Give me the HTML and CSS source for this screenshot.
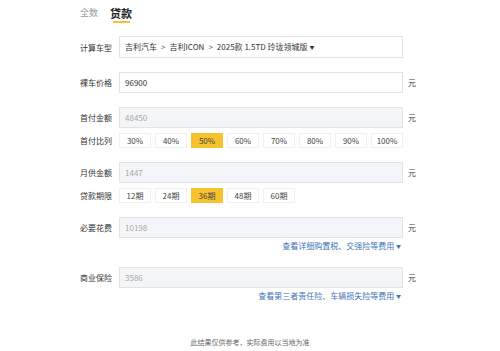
FILE: index.html
```html
<!DOCTYPE html>
<html>
<head>
  <meta charset="utf-8">
  <title>贷款计算</title>
  <link rel="stylesheet" href="styles.css">
</head>
<body>
<div class="calc">

  <div class="tabs">
    <span class="tab">全数</span>
    <span class="tab active">贷款</span>
  </div>

  <div class="row first">
    <span class="label">计算车型</span>
    <div class="box">吉利汽车<span class="sep">&gt;</span>吉利ICON<span class="sep">&gt;</span>2025款 1.5TD 玲珑领城版 <span class="caret">▼</span></div>
    <span class="unit"></span>
  </div>

  <div class="row gap">
    <span class="label">裸车价格</span>
    <div class="box">96900</div>
    <span class="unit">元</span>
  </div>

  <div class="row gap">
    <span class="label">首付金额</span>
    <div class="box off">48450</div>
    <span class="unit">元</span>
  </div>
  <div class="row opts">
    <span class="label">首付比列</span>
    <div class="btns">
      <span class="btn">30%</span>
      <span class="btn">40%</span>
      <span class="btn on">50%</span>
      <span class="btn">60%</span>
      <span class="btn">70%</span>
      <span class="btn">80%</span>
      <span class="btn">90%</span>
      <span class="btn">100%</span>
    </div>
  </div>

  <div class="row gap">
    <span class="label">月供金额</span>
    <div class="box off">1447</div>
    <span class="unit">元</span>
  </div>
  <div class="row opts">
    <span class="label">贷款期限</span>
    <div class="btns">
      <span class="btn">12期</span>
      <span class="btn">24期</span>
      <span class="btn on">36期</span>
      <span class="btn">48期</span>
      <span class="btn">60期</span>
    </div>
  </div>

  <div class="row gap">
    <span class="label">必要花费</span>
    <div class="box off">10198</div>
    <span class="unit">元</span>
  </div>
  <div class="more">查看详细购置税、交强险等费用 <span class="caret">▼</span></div>

  <div class="row gap2">
    <span class="label">商业保险</span>
    <div class="box off">3586</div>
    <span class="unit">元</span>
  </div>
  <div class="more">查看第三者责任险、车辆损失险等费用 <span class="caret">▼</span></div>
</div>

<p class="note">此结果仅供参考，实际费用以当地为准</p>
</body>
</html>
```

FILE: styles.css
```css
body{
  margin: 0;
  background: #ffffff;
  font-family: "Noto Sans CJK SC", "Noto Sans", sans-serif;
  color: #333333;
}

.calc {
  padding: 0 0 0 80px;
  width: 340px;
}

.tabs {
  display: flex;
  align-items: flex-end;
  gap: 12px;
  height: 21px;
  padding-top: 2px;
}

.tab {
  font-size: 9px;
  color: #9a9a9a;
  line-height: 14px;
  padding-bottom: 3px;
}

.tab.active {
  font-size: 11px;
  font-weight: bold;
  color: #222222;
  background: linear-gradient(#f4c430, #f4c430) no-repeat center bottom / 17px 2px;
}

.row {
  display: flex;
  align-items: center;
}

.row.first { margin-top: 13px; }
.row.gap { margin-top: 14px; }
.row.gap2 { margin-top: 16px; }
.row.opts { margin-top: 5px; }

.label {
  width: 39px;
  flex: none;
  font-size: 8px;
  color: #333333;
}

.box {
  width: 284px;
  height: 21px;
  box-sizing: border-box;
  border: 1px solid #e3e3e3;
  background: #ffffff;
  padding-left: 5px;
  font-size: 8px;
  line-height: 19px;
  color: #333333;
}

.first .box {
  height: 22px;
  line-height: 20px;
}

.sep {
  padding: 0 4px;
  color: #555555;
}

.box.off {
  background: #f4f5f8;
  color: #a8a8a8;
}

.caret {
  font-size: 5px;
  vertical-align: 1px;
}

.unit {
  font-size: 8px;
  padding-left: 5px;
  color: #444444;
}

.btns {
  display: flex;
  gap: 4px;
}

.btn {
  width: 32px;
  height: 15px;
  box-sizing: border-box;
  border: 1px solid #f0f0f0;
  text-align: center;
  font-size: 8px;
  line-height: 13px;
  color: #444444;
}

.btn.on {
  background: #f6c22d;
  border-color: #f6c22d;
}

.more {
  width: 321px;
  text-align: right;
  font-size: 8px;
  color: #3f74b5;
  margin-top: 3px;
  line-height: 10px;
}

.more .caret {
  font-size: 5px;
}

.note {
  margin: 36px 0 0;
  text-align: center;
  font-size: 7px;
  color: #666666;
}
```
